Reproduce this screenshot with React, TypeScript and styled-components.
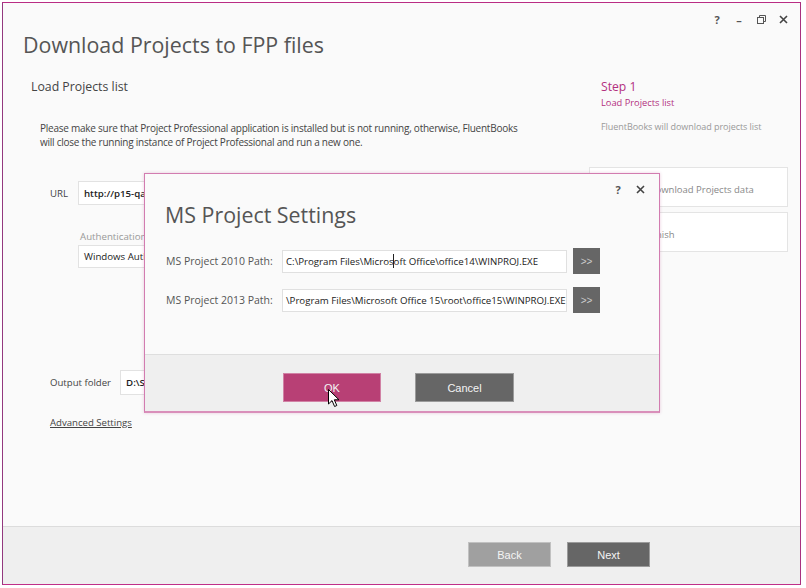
import React from "react";
import styled, { createGlobalStyle } from "styled-components";

const GlobalStyle = createGlobalStyle`
  html, body { margin: 0; padding: 0; background: #ffffff; }
  body { font-family: "Open Sans", "Noto Sans", sans-serif; }
  * { box-sizing: border-box; }
`;

const Window = styled.div`
  position: relative;
  margin: 2px 0 0 2px;
  width: 799px;
  height: 583px;
  border: 1px solid #a8307f;
  border-top-color: #b92d84;
  border-left-color: #93397f;
  border-bottom-color: #c02f88;
  background: #fafafa;
  display: flex;
  flex-direction: column;
  overflow: hidden;
`;

const Controls = styled.div`
  display: flex;
  justify-content: flex-end;
  align-items: center;
  height: 27px;
  padding: 5px 6px 0 0;
`;

const CtrlBtn = styled.div`
  width: 22px;
  height: 22px;
  display: flex;
  align-items: center;
  justify-content: center;
  font-size: 11px;
  font-weight: 700;
  color: #555;
`;

const Title = styled.h1`
  margin: 0 0 0 20px;
  font-size: 21.4px;
  font-weight: 400;
  color: #555;
  line-height: 30px;
`;

const Body = styled.div`
  flex: 1;
  display: grid;
  grid-template-columns: 586px 1fr;
`;

const Main = styled.div`
  padding: 17px 0 0 28px;
  display: flex;
  flex-direction: column;
  align-items: flex-start;
`;

const Side = styled.div`
  padding: 18px 12px 0 0;
  display: flex;
  flex-direction: column;
`;

const Subtitle = styled.h2`
  margin: 0;
  font-size: 12.3px;
  font-weight: 400;
  color: #444;
  line-height: 20px;
`;

const Note = styled.p`
  margin: 24px 0 0 9px;
  font-size: 10px;
  letter-spacing: -0.24px;
  line-height: 14px;
  color: #444;
  width: 490px;
`;

const FormRow = styled.div<{ $top: number; $gap: number }>`
  display: flex;
  align-items: center;
  margin-top: ${(p) => p.$top}px;
  padding-left: 19px;
  gap: ${(p) => p.$gap}px;
`;

const Label = styled.span`
  font-size: 9.6px;
  color: #444;
`;

const Field = styled.div<{ $w: number; $h: number; $bold?: boolean }>`
  width: ${(p) => p.$w}px;
  height: ${(p) => p.$h}px;
  background: #fff;
  border: 1px solid #e2e2e2;
  font-size: 9.7px;
  color: #222;
  font-weight: ${(p) => (p.$bold ? 600 : 400)};
  display: flex;
  align-items: center;
  padding-left: 5px;
  white-space: nowrap;
  overflow: hidden;
`;

const AuthBlock = styled.div`
  margin: 25px 0 0 47px;
  display: flex;
  flex-direction: column;
  gap: 1px;
`;

const AuthLabel = styled.span`
  font-size: 9.7px;
  line-height: 14px;
  color: #999;
  padding-left: 2px;
`;

const LinkText = styled.a`
  margin: 21px 0 0 19px;
  font-size: 9.6px;
  line-height: 14px;
  color: #444;
  text-decoration: underline;
`;

const StepTitle = styled.div`
  font-size: 12.2px;
  color: #b3307f;
  line-height: 18px;
  padding-left: 12px;
`;

const StepSub = styled.div`
  font-size: 9.3px;
  color: #b3307f;
  padding-left: 12px;
  line-height: 14px;
`;

const StepDesc = styled.div`
  font-size: 9px;
  letter-spacing: -0.05px;
  color: #999;
  padding-left: 12px;
  margin-top: 10px;
  line-height: 14px;
`;

const StepBoxes = styled.div`
  display: flex;
  flex-direction: column;
  margin-top: 33px;
  gap: 5px;
`;

const StepBox = styled.div`
  height: 40px;
  background: #fff;
  border: 1px solid #e4e4e4;
  font-size: 9.5px;
  color: #888;
  display: flex;
  align-items: center;
  padding: 5px 0 0 26px;
`;

const Footer = styled.div`
  height: 58px;
  background: #efefef;
  border-top: 1px solid #dcdcdc;
  display: flex;
  justify-content: flex-end;
  align-items: center;
  gap: 16px;
  padding-right: 150px;
  padding-bottom: 2px;
`;

const Btn = styled.div<{ $bg: string; $w: number; $h: number }>`
  width: ${(p) => p.$w}px;
  height: ${(p) => p.$h}px;
  background: ${(p) => p.$bg};
  border: 1px solid rgba(255, 255, 255, 0.35);
  color: #f4f4f4;
  font-family: "Liberation Sans", Arial, sans-serif;
  font-size: 11px;
  display: flex;
  align-items: center;
  justify-content: center;
`;

const Dialog = styled.div`
  position: absolute;
  left: 141px;
  top: 170px;
  width: 516px;
  height: 240px;
  background: #fafafa;
  border: 1px solid #d27cb0;
  border-bottom: 2px solid #d98fba;
  display: flex;
  flex-direction: column;
  box-shadow: 0 0 3px rgba(180, 60, 130, 0.25);
`;

const DlgControls = styled.div`
  display: flex;
  justify-content: flex-end;
  align-items: center;
  padding: 5px 8px 0 0;
  height: 26px;
`;

const DlgTitle = styled.div`
  margin: 0 0 0 20px;
  font-size: 21.4px;
  color: #555;
  line-height: 30px;
`;

const PathRow = styled.div<{ $top: number }>`
  display: flex;
  align-items: center;
  margin-top: ${(p) => p.$top}px;
  padding-left: 21px;
`;

const PathLabel = styled.span`
  width: 116px;
  font-size: 10.5px;
  color: #555;
`;

const PathField = styled.div`
  width: 285px;
  height: 23px;
  background: #fff;
  border: 1px solid #e0e0e0;
  font-size: 9.7px;
  color: #222;
  display: flex;
  align-items: center;
  padding-left: 3px;
  white-space: nowrap;
  overflow: hidden;
`;

const Caret = styled.span`
  display: inline-block;
  width: 1px;
  height: 14px;
  background: #222;
  margin: 0 -0.5px;
`;

const BrowseBtn = styled.div`
  margin-left: 6px;
  width: 27px;
  height: 26px;
  background: #666;
  color: #ccc;
  font-size: 10px;
  display: flex;
  align-items: center;
  justify-content: center;
  font-family: "Liberation Sans", Arial, sans-serif;
`;

const DlgFooter = styled.div`
  margin-top: auto;
  height: 57px;
  background: #efefef;
  border-top: 1px solid #dedede;
  display: flex;
  align-items: flex-start;
  padding: 18px 0 0 138px;
  gap: 34px;
`;

const Pointer = styled.svg`
  position: absolute;
  left: 183px;
  top: 215px;
`;

const CloseIcon = () => (
  <svg width="9" height="9" viewBox="0 0 9 9">
    <path d="M1 1 L8 8 M8 1 L1 8" stroke="#444" strokeWidth="1.6" />
  </svg>
);

export default function App() {
  return (
    <>
      <GlobalStyle />
      <Window>
        <Controls>
          <CtrlBtn>?</CtrlBtn>
          <CtrlBtn>–</CtrlBtn>
          <CtrlBtn>
            <svg width="9" height="9" viewBox="0 0 9 9">
              <rect x="0.5" y="2.5" width="6" height="6" fill="none" stroke="#555" />
              <path d="M2.5 2.5 V0.5 H8.5 V6.5 H6.5" fill="none" stroke="#555" />
            </svg>
          </CtrlBtn>
          <CtrlBtn>
            <CloseIcon />
          </CtrlBtn>
        </Controls>
        <Title>Download Projects to FPP files</Title>
        <Body>
          <Main>
            <Subtitle>Load Projects list</Subtitle>
            <Note>
              Please make sure that Project Professional application is installed but is not running, otherwise, FluentBooks
              will close the running instance of Project Professional and run a new one.
            </Note>
            <FormRow $top={32} $gap={10}>
              <Label>URL</Label>
              <Field $w={300} $h={24} $bold>http://p15-qa/pwa</Field>
            </FormRow>
            <AuthBlock>
              <AuthLabel>Authentication</AuthLabel>
              <Field $w={300} $h={23}>Windows Authentication</Field>
            </AuthBlock>
            <FormRow $top={102} $gap={9}>
              <Label>Output folder</Label>
              <Field $w={300} $h={25} $bold>D:\Samples</Field>
            </FormRow>
            <LinkText>Advanced Settings</LinkText>
          </Main>
          <Side>
            <StepTitle>Step 1</StepTitle>
            <StepSub>Load Projects list</StepSub>
            <StepDesc>FluentBooks will download projects list</StepDesc>
            <StepBoxes>
              <StepBox>Step 2: Download Projects data</StepBox>
              <StepBox>Step 3: Finish</StepBox>
            </StepBoxes>
          </Side>
        </Body>
        <Footer>
          <Btn $bg="#a0a0a0" $w={83} $h={25}>Back</Btn>
          <Btn $bg="#666666" $w={83} $h={25}>Next</Btn>
        </Footer>
        <Dialog>
          <DlgControls>
            <CtrlBtn>?</CtrlBtn>
            <CtrlBtn>
              <CloseIcon />
            </CtrlBtn>
          </DlgControls>
          <DlgTitle>MS Project Settings</DlgTitle>
          <PathRow $top={18}>
            <PathLabel>MS Project 2010 Path:</PathLabel>
            <PathField>
              C:\Program Files\Micros
              <Caret />
              oft Office\office14\WINPROJ.EXE
            </PathField>
            <BrowseBtn>&gt;&gt;</BrowseBtn>
          </PathRow>
          <PathRow $top={13}>
            <PathLabel>MS Project 2013 Path:</PathLabel>
            <PathField>\Program Files\Microsoft Office 15\root\office15\WINPROJ.EXE</PathField>
            <BrowseBtn>&gt;&gt;</BrowseBtn>
          </PathRow>
          <DlgFooter>
            <Btn $bg="#b84075" $w={98} $h={29}>OK</Btn>
            <Btn $bg="#666666" $w={99} $h={29}>Cancel</Btn>
          </DlgFooter>
          <Pointer width="12" height="19" viewBox="0 0 12 19">
            <path d="M0.5 0.5 L0.5 15 L4 11.6 L6.6 17.5 L8.8 16.5 L6.3 10.8 L11 10.8 Z" fill="#fff" stroke="#000" strokeWidth="1" />
          </Pointer>
        </Dialog>
      </Window>
    </>
  );
}
